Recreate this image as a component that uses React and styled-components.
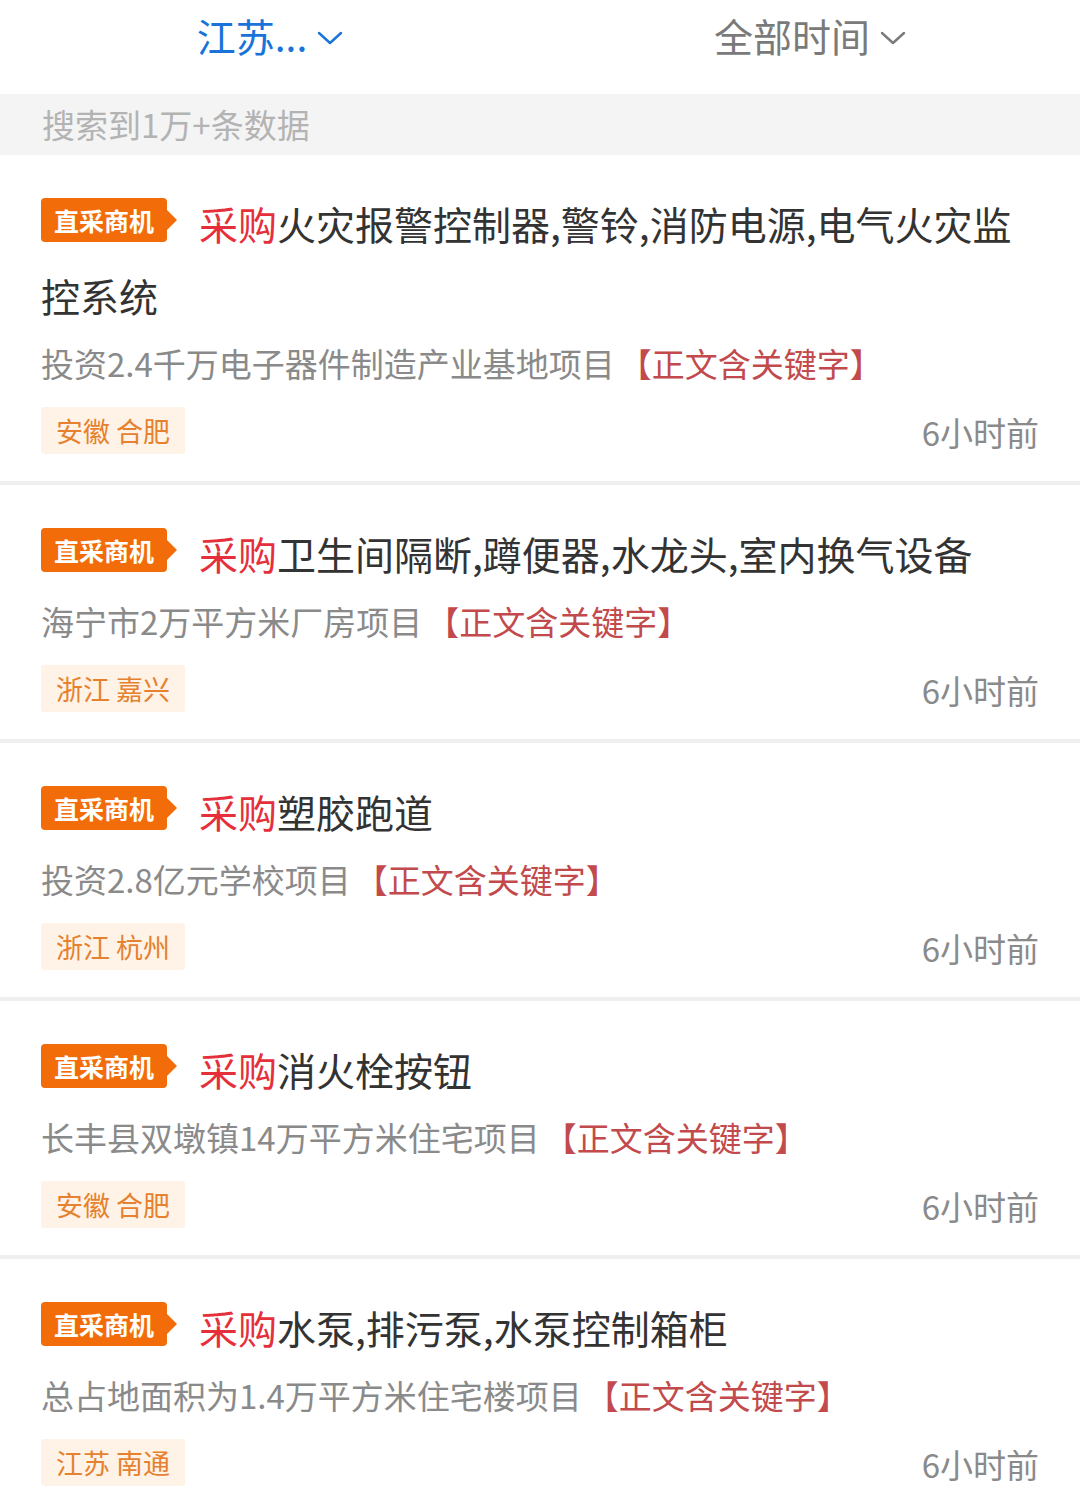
import React from 'react'
import styled, { createGlobalStyle } from 'styled-components'

const GlobalStyle = createGlobalStyle`
    body {
        margin: 0;
        background: #fff;
        font-family: "Noto Sans CJK SC", "Noto Sans", sans-serif;
    }
`

const Page = styled.div`
    width: 1080px;
    background: #fff;
`

const FilterBar = styled.div`
    display: flex;
    height: 94px;
    align-items: center;
`

const Filter = styled.div`
    flex: 1;
    display: flex;
    justify-content: center;
    align-items: center;
    gap: 10px;
    padding-bottom: 24px;
    font-size: 39px;
    color: ${props => props.active ? '#1a73d9' : '#7a7a7a'};
`

const Chevron = styled.svg`
    width: 26px;
    height: 16px;
    margin-top: 6px;
`

const Summary = styled.div`
    background: #f4f4f4;
    height: 61px;
    line-height: 61px;
    padding-left: 42px;
    font-size: 33px;
    color: #b3b3b3;
`

const Card = styled.div`
    padding: 32px 41px 27px 41px;
    border-bottom: 4px solid #efefef;
`

const Title = styled.div`
    font-size: 39px;
    line-height: 72px;
    color: #333;
`

const Badge = styled.span`
    position: relative;
    display: inline-block;
    vertical-align: top;
    margin-top: 11px;
    height: 44px;
    line-height: 44px;
    padding: 0 13px;
    margin-right: 32px;
    background: #f36c0a;
    border-radius: 4px;
    color: #fff;
    font-size: 25px;
    font-weight: 700;

    &::after {
        content: '';
        position: absolute;
        right: -10px;
        top: 12px;
        border-top: 10px solid transparent;
        border-bottom: 10px solid transparent;
        border-left: 10px solid #f36c0a;
    }
`

const Buy = styled.span`
    color: #e5303c;
`

const Sub = styled.div`
    font-size: 33px;
    line-height: 64px;
    color: #8a8a8a;
    white-space: nowrap;
`

const Keyword = styled.span`
    color: #c24a4c;
    margin-left: 4px;
`

const Meta = styled.div`
    display: flex;
    justify-content: space-between;
    align-items: center;
    height: 47px;
    margin-top: 12px;
`

const Tag = styled.span`
    display: inline-block;
    height: 47px;
    line-height: 47px;
    padding: 0 15px;
    background: #fff3e7;
    border-radius: 3px;
    color: #e5812f;
    font-size: 27px;
`

const Time = styled.span`
    font-size: 33px;
    line-height: 1;
    color: #8a8a8a;
    margin-top: 4px;
`

const items = [
    { title: '火灾报警控制器,警铃,消防电源,电气火灾监控系统', sub: '投资2.4千万电子器件制造产业基地项目', tag: '安徽 合肥' },
    { title: '卫生间隔断,蹲便器,水龙头,室内换气设备', sub: '海宁市2万平方米厂房项目', tag: '浙江 嘉兴' },
    { title: '塑胶跑道', sub: '投资2.8亿元学校项目', tag: '浙江 杭州' },
    { title: '消火栓按钮', sub: '长丰县双墩镇14万平方米住宅项目', tag: '安徽 合肥' },
    { title: '水泵,排污泵,水泵控制箱柜', sub: '总占地面积为1.4万平方米住宅楼项目', tag: '江苏 南通' },
]

const ChevronIcon = ({ color }) => (
    <Chevron viewBox="0 0 26 16">
        <polyline points="2,3 13,13 24,3" fill="none" stroke={color} strokeWidth="2.4" strokeLinecap="round" strokeLinejoin="round" />
    </Chevron>
)

const App = () => {
    return (
        <Page>
            <GlobalStyle />
            <FilterBar>
                <Filter active>
                    江苏...
                    <ChevronIcon color="#1a73d9" />
                </Filter>
                <Filter>
                    全部时间
                    <ChevronIcon color="#7a7a7a" />
                </Filter>
            </FilterBar>
            <Summary>搜索到1万+条数据</Summary>
            {items.map((item, i) => (
                <Card key={i}>
                    <Title>
                        <Badge>直采商机</Badge>
                        <Buy>采购</Buy>{item.title}
                    </Title>
                    <Sub>
                        {item.sub}<Keyword>【正文含关键字】</Keyword>
                    </Sub>
                    <Meta>
                        <Tag>{item.tag}</Tag>
                        <Time>6小时前</Time>
                    </Meta>
                </Card>
            ))}
        </Page>
    )
}

export default App
